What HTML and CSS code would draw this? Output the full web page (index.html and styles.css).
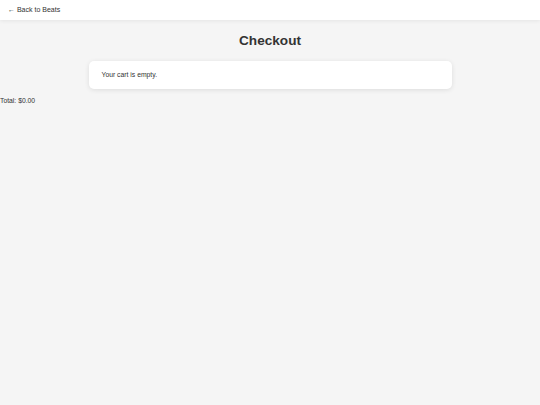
FILE: index.html
```html
<!DOCTYPE html>
<html lang="en">
<head>
    <meta charset="UTF-8">
    <meta name="viewport" content="width=device-width, initial-scale=1.0">
    <title>Checkout</title>
    <link rel="stylesheet" href="styles.css">
</head>
<body>
    <header class="top-bar">
        <a href="#" class="back-link">&larr; Back to Beats</a>
    </header>

    <main class="checkout">
        <h1>Checkout</h1>
        <div class="cart-card">
            <p class="cart-empty">Your cart is empty.</p>
        </div>
    </main>

    <div class="cart-total">Total: $0.00</div>
</body>
</html>
```

FILE: styles.css
```css
body {
    margin: 0;
    font-family: "Liberation Sans", Arial, sans-serif;
    font-size: 6.8px;
    line-height: 8px;
    color: #333;
    background-color: #f5f5f5;
}

.top-bar {
    height: 20px;
    padding: 0 8px;
    display: flex;
    align-items: center;
    background-color: #fff;
    box-shadow: 0 1px 4px rgba(0, 0, 0, 0.07);
}

.back-link {
    color: #333;
    text-decoration: none;
    font-size: 7px;
}

.checkout h1 {
    margin: 12.5px 0;
    font-size: 13.6px;
    line-height: 16px;
    text-align: center;
    color: #333;
}

.cart-card {
    width: 337px;
    margin: 0 auto;
    padding: 10px 13px;
    background-color: #fff;
    border-radius: 5px;
    box-shadow: 0 1px 5px rgba(0, 0, 0, 0.1);
}

.cart-empty {
    margin: 0;
}

.cart-total {
    margin-top: 8px;
}
```
